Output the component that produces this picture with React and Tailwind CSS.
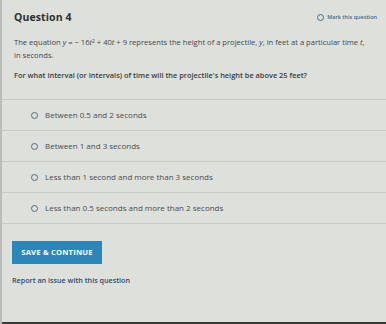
import React from 'react';

const options = [
  'Between 0.5 and 2 seconds',
  'Between 1 and 3 seconds',
  'Less than 1 second and more than 3 seconds',
  'Less than 0.5 seconds and more than 2 seconds',
];

const App = () => (
  <div
    className="flex h-[324px] w-[386px] flex-col overflow-hidden border-l-2 border-[#b9bcb7] bg-[#dde0db] text-[#3a3d40]"
    style={{ fontFamily: '"Open Sans", sans-serif' }}
  >
    <div className="flex items-center justify-between pl-[12px] pr-[9px] pt-[9px]">
      <h1 className="text-[10.5px] font-bold leading-[16px] tracking-[0.1px] text-[#2e3033]">Question 4</h1>
      <button className="flex items-center gap-[3px] text-[5.5px] font-semibold text-[#3d6b8e]">
        <span className="h-[7px] w-[7px] rounded-full border border-[#3d6b8e]" />
        Mark this question
      </button>
    </div>

    <p className="mt-[11px] pl-[12px] text-[7.6px] leading-[13px] text-[#45484b]">
      The equation <i>y</i> = − 16<i>t</i>
      <sup className="text-[5px]">2</sup> + 40<i>t</i> + 9 represents the height of a projectile, <i>y</i>, in feet at a
      particular time <i>t</i>,
      <br />
      in seconds.
    </p>

    <p className="mt-[7px] pl-[12px] text-[7.4px] font-semibold leading-[13px] text-[#3a3d40]">
      For what interval (or intervals) of time will the projectile's height be above 25 feet?
    </p>

    <div className="mt-[17px] border-t border-[#c7cbc6]">
      {options.map((o) => (
        <div key={o} className="flex h-[31px] items-center gap-[7px] border-b border-[#c7cbc6] pl-[29px]">
          <span className="h-[7px] w-[7px] rounded-full border-[1.5px] border-[#4f6e83]" />
          <span className="text-[8px] text-[#4a4d50]">{o}</span>
        </div>
      ))}
    </div>

    <div className="mt-[17px] pl-[10px]">
      <button className="flex h-[23px] w-[90px] items-center justify-center bg-[#2b87ba] text-[7.6px] font-bold tracking-[0.2px] text-white">
        SAVE &amp; CONTINUE
      </button>
      <p className="mt-[11px] text-[7.2px] font-semibold text-[#2f4d70]">Report an issue with this question</p>
    </div>

    <div className="mt-auto h-[2px] bg-[#3a3a3a]" />
  </div>
);

export default App;
